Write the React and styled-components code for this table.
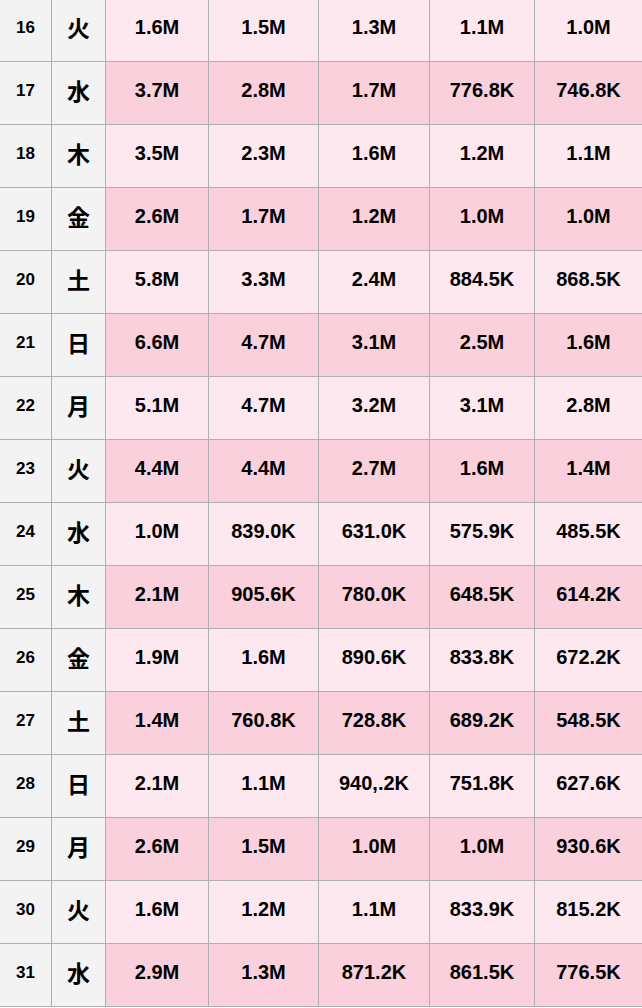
import React from 'react';
import styled, { createGlobalStyle } from 'styled-components';

const GlobalStyle = createGlobalStyle`
    html, body {
        margin: 0;
        padding: 0;
        background: #fff;
        overflow: hidden;
    }
    body {
        font-family: "Liberation Sans", Arial, "Noto Sans CJK JP", sans-serif;
        color: #000;
    }
`

let Sheet = styled.div`
    width: 642px;
    margin-top: -2px;
    border-top: 1px solid #b4b4b4;
`
let Row = styled.div`
    display: grid;
    grid-template-columns: 52px 54px 103px 110px 111px 105px 107px;
    height: 63px;
    box-sizing: border-box;
    border-bottom: 1px solid #b0b0b0;
`
let Cell = styled.div`
    display: flex;
    align-items: center;
    justify-content: center;
    box-sizing: border-box;
    border-right: 1px solid #b0b0b0;
    font-weight: bold;
    background: ${p => p.$dark ? '#f9d0dc' : '#fde8ef'};
    font-size: 20px;
    &:last-child {
        border-right: none;
    }
`
let DayCell = styled(Cell)`
    background: #f3f3f3;
    font-size: 17px;
    padding-bottom: 4px;
`
let WeekCell = styled(Cell)`
    background: #f3f3f3;
    font-family: "Noto Sans CJK JP", sans-serif;
    font-size: 23px;
    padding-bottom: 6px;
`
let Value = styled.span`
    padding-bottom: 5px;
`

let rows = [
    [16, '火', '1.6M', '1.5M', '1.3M', '1.1M', '1.0M'],
    [17, '水', '3.7M', '2.8M', '1.7M', '776.8K', '746.8K'],
    [18, '木', '3.5M', '2.3M', '1.6M', '1.2M', '1.1M'],
    [19, '金', '2.6M', '1.7M', '1.2M', '1.0M', '1.0M'],
    [20, '土', '5.8M', '3.3M', '2.4M', '884.5K', '868.5K'],
    [21, '日', '6.6M', '4.7M', '3.1M', '2.5M', '1.6M'],
    [22, '月', '5.1M', '4.7M', '3.2M', '3.1M', '2.8M'],
    [23, '火', '4.4M', '4.4M', '2.7M', '1.6M', '1.4M'],
    [24, '水', '1.0M', '839.0K', '631.0K', '575.9K', '485.5K'],
    [25, '木', '2.1M', '905.6K', '780.0K', '648.5K', '614.2K'],
    [26, '金', '1.9M', '1.6M', '890.6K', '833.8K', '672.2K'],
    [27, '土', '1.4M', '760.8K', '728.8K', '689.2K', '548.5K'],
    [28, '日', '2.1M', '1.1M', '940,.2K', '751.8K', '627.6K'],
    [29, '月', '2.6M', '1.5M', '1.0M', '1.0M', '930.6K'],
    [30, '火', '1.6M', '1.2M', '1.1M', '833.9K', '815.2K'],
    [31, '水', '2.9M', '1.3M', '871.2K', '861.5K', '776.5K'],
];

export default function App() {
    return (
        <>
            <GlobalStyle />
            <Sheet>
                {rows.map(([day, week, ...values], i) => (
                    <Row key={day}>
                        <DayCell>{day}</DayCell>
                        <WeekCell>{week}</WeekCell>
                        {values.map((v, j) => (
                            <Cell key={j} $dark={i % 2 === 1}>
                                <Value>{v}</Value>
                            </Cell>
                        ))}
                    </Row>
                ))}
            </Sheet>
        </>
    );
}
